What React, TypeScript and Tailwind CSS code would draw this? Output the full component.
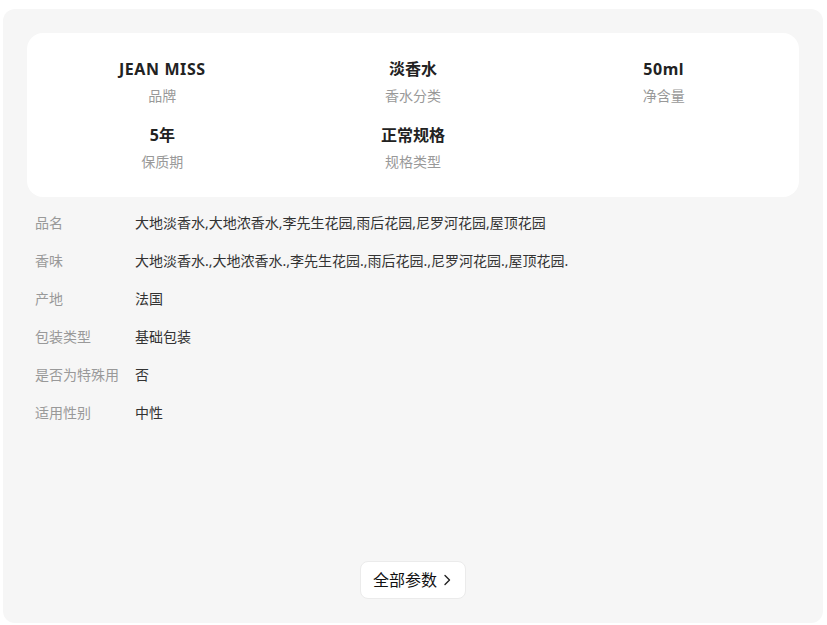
import React from "react";

const top = [
  { v: "JEAN MISS", l: "品牌", latin: true },
  { v: "淡香水", l: "香水分类", latin: false },
  { v: "50ml", l: "净含量", latin: true },
  { v: "5年", l: "保质期", latin: false },
  { v: "正常规格", l: "规格类型", latin: false },
];

const rows = [
  { l: "品名", v: "大地淡香水,大地浓香水,李先生花园,雨后花园,尼罗河花园,屋顶花园" },
  { l: "香味", v: "大地淡香水.,大地浓香水.,李先生花园.,雨后花园.,尼罗河花园.,屋顶花园." },
  { l: "产地", v: "法国" },
  { l: "包装类型", v: "基础包装" },
  { l: "是否为特殊用", v: "否" },
  { l: "适用性别", v: "中性" },
];

export default function App() {
  return (
    <div
      className="w-[827px] h-[625px] bg-white pt-[9px] pl-[3px]"
      style={{ fontFamily: '"Noto Sans", "Noto Sans CJK SC", sans-serif' }}
    >
      <div className="w-[820px] h-[614px] bg-[#f6f6f6] rounded-[12px] p-6 flex flex-col">
        <div className="bg-white rounded-[16px] px-[10px] pt-6 pb-[25px] grid grid-cols-3 gap-y-[17px]">
          {top.map((t) => (
            <div key={t.l} className="flex flex-col items-center">
              <div
                className={
                  t.latin
                    ? "text-[16px] leading-[24px] font-bold text-[#222] tracking-[0.6px]"
                    : "text-[16px] leading-[24px] font-bold text-[#222]"
                }
              >
                {t.v}
              </div>
              <div className="mt-[5px] text-[14px] leading-[20px] text-[#999]">{t.l}</div>
            </div>
          ))}
        </div>
        <div className="mt-[6px] pl-2 flex flex-col">
          {rows.map((r) => (
            <div key={r.l} className="h-[38px] flex items-center text-[14px]">
              <div className="w-[100px] text-[#999]">{r.l}</div>
              <div className="text-[#333]">{r.v}</div>
            </div>
          ))}
        </div>
        <div className="mt-auto flex justify-center">
          <button className="h-[38px] w-[106px] bg-white border border-[#ebebeb] rounded-[8px] flex items-center pl-[12px] text-[16px] text-[#111]">
            <span>全部参数</span>
            <svg className="ml-[6px]" width="9" height="12" viewBox="0 0 9 12" fill="none">
              <path d="M2 1.5 L6.5 6 L2 10.5" stroke="#222" strokeWidth="1.4" strokeLinecap="round" strokeLinejoin="round" />
            </svg>
          </button>
        </div>
      </div>
    </div>
  );
}
